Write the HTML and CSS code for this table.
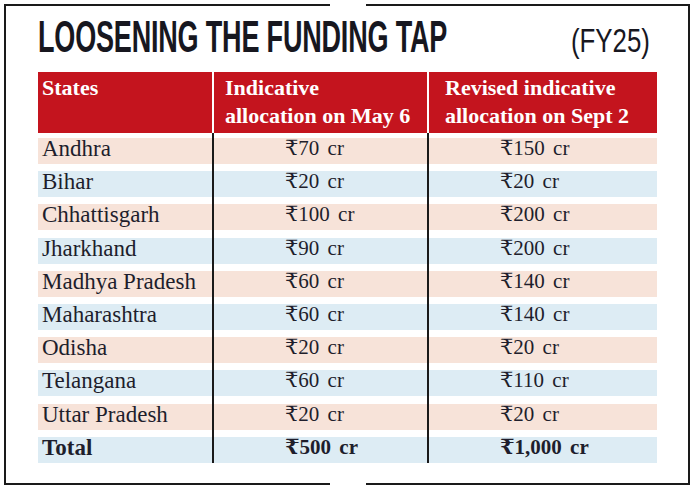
FILE: index.html
```html
<!DOCTYPE html>
<html lang="en">
<head>
<meta charset="utf-8">
<title>Loosening the funding tap</title>
<link rel="stylesheet" href="styles.css">
</head>
<body>
<div class="frame">
  <div class="rule"><span class="seg seg-left"></span><span class="seg seg-right"></span></div>
  <div class="box">
    <div class="titlebar">
      <h1 class="title"><span class="title-text">LOOSENING THE FUNDING TAP</span></h1>
      <span class="fy">(FY25)</span>
    </div>
    <div class="thead">
      <div class="th th1">States</div>
      <div class="th th2">Indicative<br>allocation on May 6</div>
      <div class="th th3">Revised indicative<br>allocation on Sept 2</div>
    </div>
    <div class="tbody">
      <div class="td name pink">Andhra</div><div class="td val pink">₹70 cr</div><div class="td val pink">₹150 cr</div>
      <div class="td name blue">Bihar</div><div class="td val blue">₹20 cr</div><div class="td val blue">₹20 cr</div>
      <div class="td name pink">Chhattisgarh</div><div class="td val pink">₹100 cr</div><div class="td val pink">₹200 cr</div>
      <div class="td name blue">Jharkhand</div><div class="td val blue">₹90 cr</div><div class="td val blue">₹200 cr</div>
      <div class="td name pink">Madhya Pradesh</div><div class="td val pink">₹60 cr</div><div class="td val pink">₹140 cr</div>
      <div class="td name blue">Maharashtra</div><div class="td val blue">₹60 cr</div><div class="td val blue">₹140 cr</div>
      <div class="td name pink">Odisha</div><div class="td val pink">₹20 cr</div><div class="td val pink">₹20 cr</div>
      <div class="td name blue">Telangana</div><div class="td val blue">₹60 cr</div><div class="td val blue">₹110 cr</div>
      <div class="td name pink">Uttar Pradesh</div><div class="td val pink">₹20 cr</div><div class="td val pink">₹20 cr</div>
      <div class="td name blue total">Total</div><div class="td val blue total">₹500 cr</div><div class="td val blue total">₹1,000 cr</div>
    </div>
  </div>
  <div class="rule"><span class="seg seg-left"></span><span class="seg seg-right"></span></div>
</div>
</body>
</html>
```

FILE: styles.css
```css
html, body {
  margin: 0;
  padding: 0;
  background: #ffffff;
}

body {
  font-family: "Liberation Serif", "DejaVu Serif", "DejaVu Sans", serif;
  color: #1e1e2c;
}

.frame {
  width: 686px;
  margin: 4px 0 0 4px;
}

.rule {
  display: flex;
  justify-content: space-between;
  height: 2px;
}

.seg {
  display: block;
  height: 2px;
  background: #1a1a1a;
}

.seg-left { width: 326px; }
.seg-right { width: 324px; }

.box {
  height: 477px;
  box-sizing: border-box;
  border-left: 2px solid #1a1a1a;
  border-right: 2px solid #1a1a1a;
  padding: 9px 31px 0 32px;
}

.titlebar {
  display: flex;
  justify-content: space-between;
  align-items: baseline;
  height: 46px;
}

.title {
  flex: 1 1 0;
  min-width: 0;
  margin: 0;
  font-family: "Liberation Sans", Arial, sans-serif;
  font-weight: bold;
  font-size: 44px;
  line-height: 44px;
  color: #17171f;
  white-space: nowrap;
}

.title-text {
  display: inline-block;
  transform: scaleX(0.614);
  transform-origin: left center;
  letter-spacing: -0.3px;
}

.fy {
  flex: none;
  display: inline-block;
  font-family: "Liberation Sans", Arial, sans-serif;
  font-size: 34px;
  line-height: 44px;
  color: #17171f;
  margin-right: 7px;
  transform: scaleX(0.76);
  transform-origin: right center;
  white-space: nowrap;
}

.thead {
  margin-top: 11px;
  display: grid;
  grid-template-columns: 174px 213px 228px;
  column-gap: 2px;
  background: #ffffff;
}

.th {
  background: #c4141e;
  color: #ffffff;
  font-weight: bold;
  font-size: 22px;
  line-height: 28px;
  height: 61px;
  box-sizing: border-box;
  padding-top: 2px;
  white-space: nowrap;
}

.th1 { padding-left: 4px; }
.th2 { padding-left: 11px; }
.th3 { padding-left: 16px; }

.tbody {
  padding-top: 5px;
  display: grid;
  grid-template-columns: 174px 213px 228px;
  grid-auto-rows: 26px;
  column-gap: 2px;
  row-gap: 7.2px;
  background: linear-gradient(to right,
    #ffffff 0, #ffffff 174px,
    #1a1a1a 174px, #1a1a1a 176px,
    #ffffff 176px, #ffffff 389px,
    #1a1a1a 389px, #1a1a1a 391px,
    #ffffff 391px);
}

.td {
  height: 26px;
  box-sizing: border-box;
  line-height: 21px;
  white-space: nowrap;
}

.pink { background: #f7e3d9; }
.blue { background: #ddecf4; }

.name {
  font-size: 23px;
  padding-left: 4px;
}

.val {
  font-size: 21px;
  padding-left: 71px;
  word-spacing: 3px;
}

.total {
  font-weight: bold;
}
```
